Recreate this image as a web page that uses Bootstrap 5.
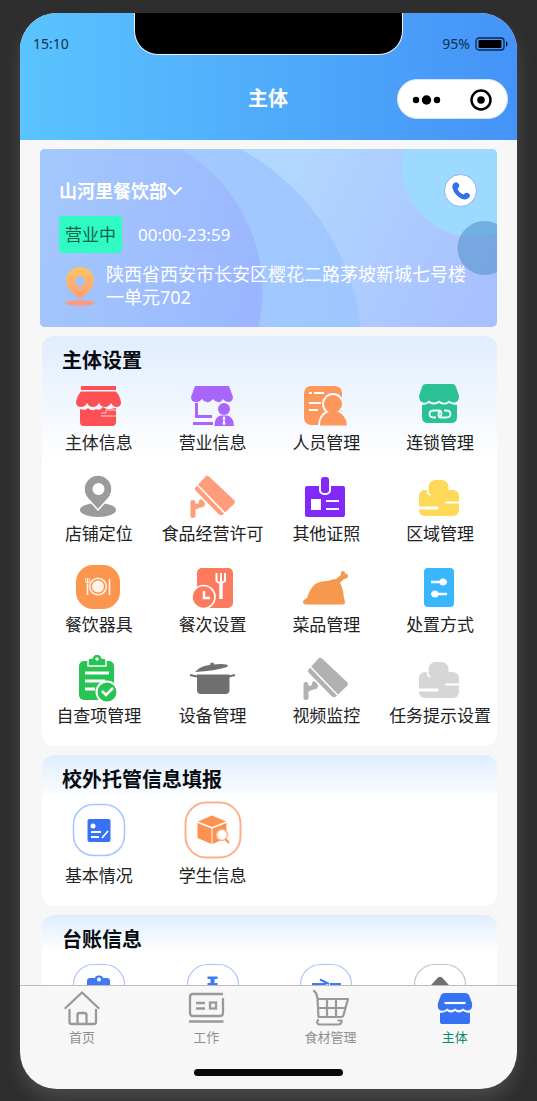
<!DOCTYPE html>
<html lang="zh-CN">
<head>
<meta charset="utf-8">
<meta name="viewport" content="width=device-width, initial-scale=1">
<title>主体</title>
<link href="https://cdn.jsdelivr.net/npm/bootstrap@5.3.0/dist/css/bootstrap.min.css" rel="stylesheet">
<style>
  body { background: #2e2e2e; font-family: "Noto Sans", "Noto Sans CJK SC", sans-serif; color: #222; }
  a { color: inherit; text-decoration: none; }
  .stage { height: 100vh; padding: 13px 20px 12px; }
  .phone { height: 100%; border-radius: 37px; background: #f7f7f7; box-shadow: 0 10px 16px #484848; }
  .topbar { height: 127px; background: linear-gradient(90deg, #5ac4fe, #4593f8); }
  .notch { top: 0; width: 54%; height: 42px; left: 23%; background: #000; border: 1px solid #e8f4ff; border-top: 0; border-radius: 0 0 24px 24px; }
  .statusline { height: 20px; margin-top: 21px; padding: 0 8px 0 13px; font-size: 14px; line-height: 20px; color: #12304f; }
  .titleline { height: 40px; margin-top: 25px; padding-right: 9px; }
  .titleline h1 { font-size: 20px; line-height: 30px; }
  .capsule { width: 111px; height: 40px; border: 1px solid #d5e3f8; }
  .capsule button, .picker { border: 0; padding: 0; background: none; }
  .feed { padding: 9px 20px 0; scrollbar-width: none; min-height: 0; }
  .feed::-webkit-scrollbar { display: none; }
  .hero { min-height: 178px; padding: 25px 20px 16px 19px; border-radius: 5px; color: #fff; margin-bottom: 9px; }
  .backdrop { inset: 0; }
  .shop { height: 33px; font-size: 18px; line-height: 28px; }
  .picker { color: #fff; }
  .call { width: 33px; height: 33px; padding: 0; background: #fff; border: 1px solid #8fb0f5; }
  .hours { margin-top: 9px; font-size: 17px; line-height: 37px; }
  .open-tag { background: #2ffbc3; color: #14614c; padding: 0 6px; border-radius: 4px; margin-right: 16px; }
  .address { margin-top: 10px; font-size: 18px; line-height: 23px; }
  .panel { margin: 0 0 9px 2px; padding-top: 10px; border-radius: 12px; background: linear-gradient(180deg, #e0edfe, #fff 30%); }
  .panel h2 { font-size: 20px; line-height: 30px; margin: 0 0 6px 20px; color: #080c12; }
  .tile { font-size: 17px; line-height: 26px; padding-bottom: 17px; white-space: nowrap; }
  .ringed svg { margin-bottom: 4px; }
  .tabbar { border-top: 1px solid #bdbdbd; height: 104px; padding-top: 2px; color: #8f8f8f; font-size: 13px; line-height: 18px; }
  .tabbar .active { color: #0b8a68; }
  .home-line { width: 30%; height: 7px; background: #0b0b0b; margin: 23px auto 0; border-radius: 4px; }
</style>
</head>
<body>
<svg width="0" height="0" class="position-absolute" aria-hidden="true">
  <symbol id="camera" viewBox="0 0 48 48">
    <path fill="currentColor" d="M16.500 3.500q1.500-1.500 3.500 0L45 27q2 2 0 4L34 41.500q-2 1.500-4 0L6.500 17.500q-1.500-1.500 0-3z"/>
    <path stroke="#fff" stroke-width="1.600" d="M8 11.500L36.500 41"/>
    <path fill="currentColor" d="M1.500 29q0-2 2.300-2t2.700 2v2l3-.5 1-4q3-1 5.500 4 0 4-4.500 4l-5 2v6q0 2.500-2.700 2.500t-2.300-2.500z"/>
  </symbol>
  <symbol id="cloud" viewBox="0 0 48 48">
    <rect fill="currentColor" x="12.500" y="7" width="20" height="28" rx="7"/>
    <rect fill="currentColor" x="3" y="17" width="40" height="26" rx="6"/>
    <path fill="none" stroke="#fff" stroke-width="1.600" d="M11.500 13v5q0 3 3 4"/>
    <path fill="#fff" d="M3 33.500h19q1.500 1.500 0 3H3zM29.500 28.500H43v2H29.500q-1.500-1 0-2z"/>
  </symbol>
</svg>
<div class="stage">
<div class="phone d-flex flex-column overflow-hidden position-relative">
  <header class="topbar flex-shrink-0 overflow-hidden">
    <div class="notch position-absolute"></div>
    <div class="statusline d-flex justify-content-between">
      <span>15:10</span>
      <span class="d-flex align-items-center gap-1">95%
        <svg width="35" height="16" viewBox="0 0 35 16" aria-hidden="true"><rect x="2" y="2" width="28" height="12" rx="3" fill="none" stroke="#10264a" stroke-width="1.300"/><rect x="4.500" y="4" width="23" height="8" rx="1"/><path d="M32 5q3 3 0 6z"/></svg></span>
    </div>
    <div class="titleline row g-0 align-items-center">
      <div class="col"></div>
      <h1 class="col-auto m-0 text-white fw-bold ps-2">主体</h1>
      <div class="col d-flex justify-content-end">
        <div class="capsule rounded-pill bg-white d-flex align-items-center justify-content-around">
          <button type="button" aria-label="更多"><svg width="30" height="22" viewBox="0 0 30 22"><circle cx="4" cy="11" r="3.200"/><circle cx="14.500" cy="11" r="4.700"/><circle cx="25" cy="11" r="3.200"/></svg></button>
          <button type="button" aria-label="关闭"><svg width="24" height="24" viewBox="0 0 24 24"><circle cx="12" cy="12" r="9.500" fill="none" stroke="#000" stroke-width="2.500"/><circle cx="12" cy="12" r="3.800"/></svg></button>
        </div>
      </div>
    </div>
  </header>

  <main class="feed flex-grow-1 overflow-auto">
    <section class="hero position-relative overflow-hidden">
      <svg class="backdrop position-absolute w-100 h-100" viewBox="0 0 458 178" preserveAspectRatio="xMidYMid slice" aria-hidden="true">
        <defs>
          <linearGradient id="sky" gradientUnits="userSpaceOnUse" x1="240" y1="40" x2="450" y2="140"><stop stop-color="#b2d7ff"/><stop offset="1" stop-color="#a9c0ff"/></linearGradient>
          <linearGradient id="wave" x1="0" x2="1"><stop offset=".3" stop-color="#a4ccff"/><stop offset="1" stop-color="#9fc7ff"/></linearGradient>
          <linearGradient id="deep" gradientUnits="userSpaceOnUse" x1="0" y1="60" x2="222" y2="120"><stop stop-color="#a3c8fc"/><stop offset="1" stop-color="#9bb6ff"/></linearGradient>
        </defs>
        <rect width="458" height="178" fill="url(#sky)"/>
        <circle cx="90" cy="205" r="233" fill="url(#wave)"/>
        <path d="M0 0H141A164 164 0 0 1 219 178H0z" fill="url(#deep)"/>
        <circle cx="434" cy="16" r="72" fill="#9cdbff" fill-opacity=".9"/>
        <circle cx="445" cy="99" r="27" fill="#4d8fc9" fill-opacity=".55"/>
      </svg>
      <div class="position-relative">
        <div class="shop d-flex align-items-center justify-content-between">
          <button type="button" class="picker fw-bold d-flex align-items-center">山河里餐饮部<svg width="16" height="12" viewBox="0 0 16 12" fill="none" stroke="#fff" stroke-width="2.200" stroke-linecap="round" aria-hidden="true"><path d="M2 3l6 6 6-6"/></svg></button>
          <button type="button" class="call rounded-circle d-flex align-items-center justify-content-center" aria-label="拨打电话"><svg width="20" height="20" viewBox="0 0 20 20" fill="#3370f0"><path d="M3 2q3-2 5 1.500 1 2-1.500 4 1.500 4.500 6 6 2-2.500 4.500-1.500 3.500 2 1 4.500-3 3.500-8 1Q3 13.500 1.500 7 1 3.500 3 2z"/></svg></button>
        </div>
        <div class="hours d-flex"><span class="open-tag">营业中</span><span>00:00-23:59</span></div>
        <div class="address d-flex">
          <svg class="flex-shrink-0 me-2" width="39" height="46" viewBox="0 0 39 46" aria-hidden="true">
            <defs><linearGradient id="pin" x1="0" y1="0" x2="0" y2="1"><stop stop-color="#fdc665"/><stop offset="1" stop-color="#ff9d79"/></linearGradient></defs>
            <ellipse cx="21" cy="40" rx="15" ry="2.800" fill="#fb9b80"/>
            <path fill="url(#pin)" fill-rule="evenodd" d="M21 4a14 14 0 0 1 14 14q0 7-9 14l-5 4-5-4Q7 25 7 18A14 14 0 0 1 21 4zm0 9.500a5 5 0 1 0 0 10 5 5 0 0 0 0-10z"/>
          </svg>
          <span>陕西省西安市长安区樱花二路茅坡新城七号楼一单元702</span>
        </div>
      </div>
    </section>

    <section class="panel">
      <h2 class="fw-bold">主体设置</h2>
      <div class="row g-0 text-center">
        <a href="#" class="tile col-3 d-flex flex-column align-items-center"><svg width="48" height="48" viewBox="0 0 48 48" fill="#fd5055"><path d="M6 4h35v4H6zM6 9.500h35q4 4 5 11 0 4-4 4.500-4 0-6-4-2 4-6 4t-6-4q-2 4-6 4t-6-4q-2 4-6 4-5 0-5-5 1-6 5-10.500zM5 27q6 2 8-1 4 4 8 1 4 2 7-2 4 3 7 2l6-1v14q0 4-4 4H9q-4 0-4-4z"/><path d="M26 31h5v-3h10M26 34h16" stroke="#fbd5da" stroke-width="1" fill="none"/></svg>主体信息</a>
        <a href="#" class="tile col-3 d-flex flex-column align-items-center"><svg width="48" height="48" viewBox="0 0 48 48" fill="#a866fc"><path d="M6 4h34l4 11q0 5-5 5-3 0-5-3-2 4-5 3-3 0-5-3-3 4-6 3-3 0-5-3-3 4-6 3-5 0-5-5z"/><path d="M7.500 21v13.500H23M4 41.500h20" fill="none" stroke="#a866fc" stroke-width="3"/><circle cx="35" cy="27" r="6"/><path d="M25.500 44q0-9 6-10.500h7q6 1.500 6.500 10.500z"/><path d="M35 34l1.500 2-1 2 1 4-1.500 1-1.500-1 1-4-1-2z" fill="#fff"/></svg>营业信息</a>
        <a href="#" class="tile col-3 d-flex flex-column align-items-center"><svg width="48" height="48" viewBox="0 0 48 48" fill="#fd975b"><rect x="2" y="4" width="38" height="39" rx="7"/><path d="M7 11h3m2 0h10M7 21h12M7 28h9" stroke="#fff" stroke-width="2"/><g stroke="#f4f8ff" stroke-width="4"><path d="M18 43.500q0-10 8.500-13.500h10q8 4 8.500 13.500z"/><circle cx="31" cy="22" r="9"/></g><path d="M18 43.500q0-10 8.500-13.500h10q8 4 8.500 13.500z"/><circle cx="31" cy="22" r="9"/></svg>人员管理</a>
        <a href="#" class="tile col-3 d-flex flex-column align-items-center"><svg width="48" height="48" viewBox="0 0 48 48" fill="#2ac295"><path d="M10 2h26q3 0 4 3l3 9q0 6-5 6.500-3 0-5-2-3 3-6 2t-4-2q-2 2-5 2t-5-2q-3 3-6 2-4-1-4-6.500L6 5q1-3 4-3zM6 23q4 0 7-2 4 3 10 0 5 3 10 0 3 2 8 2v12q0 6-6 6H12q-6 0-6-6z"/><path d="M20 35.500h-2q-4.500 0-4.500-3.500t4.500-3.500h5q2.500 0 2.500 3t-3 3M28 28.500h2q4.500 0 4.500 3.500t-4.500 3.500h-5q-2.500 0-2.500-3t3-3" fill="none" stroke="#e9fff8" stroke-width="1.800"/></svg>连锁管理</a>

        <a href="#" class="tile col-3 d-flex flex-column align-items-center"><svg width="48" height="48" viewBox="0 0 48 48" fill="#9b9b9b"><ellipse cx="23" cy="37" rx="18" ry="7"/><path stroke="#fff" stroke-width="1.500" d="M23 2a14 14 0 0 1 14 14q0 7-6 12l-8 9-8-9Q9 23 9 16A14 14 0 0 1 23 2z"/><circle cx="23.500" cy="16" r="6" fill="#fff"/></svg>店铺定位</a>
        <a href="#" class="tile col-3 d-flex flex-column align-items-center"><svg width="48" height="48" color="#fe9d7c"><use href="#camera"/></svg>食品经营许可</a>
        <a href="#" class="tile col-3 d-flex flex-column align-items-center"><svg width="48" height="48" viewBox="0 0 48 48" fill="#8228fb"><rect x="3" y="13" width="40" height="31" rx="2"/><rect x="18" y="3" width="10" height="18" rx="4" stroke="#fff" stroke-width="2"/><path fill="#fff" d="M9 26h10v11H9zM24 27h13v2H24zm0 8h13v2H24z"/></svg>其他证照</a>
        <a href="#" class="tile col-3 d-flex flex-column align-items-center"><svg width="48" height="48" color="#fdd957"><use href="#cloud"/></svg>区域管理</a>

        <a href="#" class="tile col-3 d-flex flex-column align-items-center"><svg width="48" height="48" viewBox="0 0 48 48"><rect x="1" y="1" width="44" height="44" rx="17" fill="#fc964f"/><g fill="none" stroke="#fff3e9"><circle cx="23" cy="22.500" r="8.300" stroke-width="1.500"/><path d="M12.500 20v11M34.500 15v16" stroke-width="1.600"/><path d="M10.800 14v4q1.700 3 3.400 0v-4M12.500 14v5" /></g><circle cx="23" cy="22.500" r="6" fill="#fff3e9"/></svg>餐饮器具</a>
        <a href="#" class="tile col-3 d-flex flex-column align-items-center"><svg width="48" height="48" viewBox="0 0 48 48" fill="#fc7a5d"><rect x="8" y="4" width="36" height="40" rx="5"/><circle cx="14.500" cy="33" r="11.500" stroke="#fff" stroke-width="1.700"/><g fill="none" stroke="#fff"><path d="M15 27v7h6" stroke-width="2.500"/><path d="M27.500 9v8q4 4 8.500 0V9M32 9v9" stroke-width="2"/><path d="M32 18v17" stroke-width="3.500"/></g></svg>餐次设置</a>
        <a href="#" class="tile col-3 d-flex flex-column align-items-center"><svg width="48" height="48" viewBox="0 0 48 48" fill="#f5994f"><path d="M1 38q0-2 4-4 3-9 7-13 5-4 14-4 4-2 8-2l5-4q-1-4 2.500-4 1.500 0 1.500 2.500 3 0 3 2.500 0 3-4 3l-4 4q3 5 4 15 1 3 1 5-1 1.500-3 1.500H4q-3 0-3-2.500z"/></svg>菜品管理</a>
        <a href="#" class="tile col-3 d-flex flex-column align-items-center"><svg width="48" height="48" viewBox="0 0 48 48" fill="#38b6fe"><rect x="8" y="4" width="30" height="39" rx="4"/><path d="M15 18h16M15 30h16" stroke="#fff" stroke-width="2.500"/><circle cx="27" cy="18" r="3.500" fill="#fff"/><circle cx="19" cy="30" r="3.500" fill="#fff"/></svg>处置方式</a>

        <a href="#" class="tile col-3 d-flex flex-column align-items-center"><svg width="48" height="48" viewBox="0 0 48 48" fill="#27c353"><rect x="4" y="6" width="35" height="39" rx="5"/><path stroke="#fff" stroke-width="1.500" d="M13 11V5q0-2 4-2 1-4 5-4t5 4q4 0 4 2v6z"/><circle cx="22" cy="4" r="1.700" fill="#fff"/><path d="M10 18h24M10 26h20M10 34h10" stroke="#fff" stroke-width="3"/><circle cx="32" cy="37" r="10.500" stroke="#fff" stroke-width="2"/><path d="M27 36l4 4 7-7" stroke="#fff" stroke-width="2.500" fill="none"/></svg>自查项管理</a>
        <a href="#" class="tile col-3 d-flex flex-column align-items-center"><svg width="48" height="48" viewBox="0 0 48 48" fill="#6f6f6f"><path d="M8 19.500h32.500V35q0 4-4 4H12q-4 0-4-4z"/><path d="M1 20l7 1.500M46 20l-6 1.500" stroke="#6f6f6f" stroke-width="2"/><path d="M6 17q5-6 15-7l.5-2 3-.5.500 2q8-1 14 .5l-1 2q-12 4-32 5z"/></svg>设备管理</a>
        <a href="#" class="tile col-3 d-flex flex-column align-items-center"><svg width="48" height="48" color="#b1b1b1"><use href="#camera"/></svg>视频监控</a>
        <a href="#" class="tile col-3 d-flex flex-column align-items-center"><svg width="48" height="48" color="#d6d6d6"><use href="#cloud"/></svg>任务提示设置</a>
      </div>
    </section>

    <section class="panel">
      <h2 class="fw-bold">校外托管信息填报</h2>
      <div class="row g-0 text-center ringed">
        <a href="#" class="tile col-3 d-flex flex-column align-items-center"><svg width="58" height="58" viewBox="0 0 58 58"><rect x="3.500" y="3.500" width="51" height="51" rx="20" fill="#fff" stroke="#a5c5fc" stroke-width="1.500"/><rect x="17.500" y="18" width="23" height="23" rx="2" fill="#3672f5"/><circle cx="23" cy="25" r="2.500" fill="#fff"/><path d="M21 31h10M21 36h8M32 37l6-7" stroke="#fff" stroke-width="1.800"/></svg>基本情况</a>
        <a href="#" class="tile col-3 d-flex flex-column align-items-center"><svg width="58" height="58" viewBox="0 0 58 58"><rect x="1.500" y="1.500" width="55" height="55" rx="21" fill="#fff" stroke="#fbb18c" stroke-width="2"/><path fill="#fc9152" d="M14 20.500L28 14.500l14 6-14 5.500zM13.500 22L27.500 27.500V43l-14-6zM42.500 22l-14 5.500V43l14-6z"/><circle cx="38" cy="34" r="5.500" fill="#fff" stroke="#fdb48b" stroke-width="1.500"/><path d="M41.500 38l3.500 4" stroke="#fc9152" stroke-width="2"/></svg>学生信息</a>
      </div>
    </section>

    <section class="panel">
      <h2 class="fw-bold">台账信息</h2>
      <div class="row g-0 ringed">
        <a href="#" class="tile col-3 d-flex justify-content-center" aria-label="台账"><svg width="58" height="58" viewBox="0 0 58 58"><rect x="3.500" y="3.500" width="51" height="51" rx="20" fill="#fff" stroke="#a5c5fc" stroke-width="1.200"/><path fill="#3f79f5" d="M17 20q0-3 3-3h5q0-2.500 4-2.500t4 2.500h4q3 0 3 3v22H17z"/><circle cx="29" cy="18.500" r="2" fill="#fff"/></svg></a>
        <a href="#" class="tile col-3 d-flex justify-content-center" aria-label="台账"><svg width="58" height="58" viewBox="0 0 58 58"><rect x="3.500" y="3.500" width="51" height="51" rx="20" fill="#fff" stroke="#a5c5fc" stroke-width="1.200"/><path fill="#3f79f5" d="M23.500 15.500h10v2.500h-3v4h3v18h-10V22h3v-4h-3z"/></svg></a>
        <a href="#" class="tile col-3 d-flex justify-content-center" aria-label="台账"><svg width="58" height="58" viewBox="0 0 58 58"><rect x="3.500" y="3.500" width="51" height="51" rx="20" fill="#fff" stroke="#a5c5fc" stroke-width="1.200"/><path fill="none" stroke="#3f79f5" stroke-width="2" d="M15 23h14M33 23h11M23 18.500l9 4.500M18 24v14h22V24"/></svg></a>
        <a href="#" class="tile col-3 d-flex justify-content-center" aria-label="台账"><svg width="58" height="58" viewBox="0 0 58 58"><rect x="3.500" y="3.500" width="51" height="51" rx="20" fill="#fff" stroke="#c2c2c2" stroke-width="1.200"/><path fill="#6f6f6f" d="M27 16.500q2-1.500 4 0l6.500 7V40h-17V23.500z"/></svg></a>
      </div>
    </section>
  </main>

  <nav class="tabbar flex-shrink-0">
    <div class="row g-0 text-center">
      <a href="#" class="col-3 d-flex flex-column align-items-center"><svg width="40" height="40" viewBox="0 0 40 40" fill="none" stroke="#999" stroke-width="2.300" stroke-linecap="round" stroke-linejoin="round"><path d="M3.500 20L20 4.500 36.500 20M7.500 22v12q0 2 2 2H32q2 0 2-2V22M15.500 36V27q0-2 2-2h5q2 0 2 2v9"/></svg>首页</a>
      <a href="#" class="col-3 d-flex flex-column align-items-center"><svg width="40" height="40" viewBox="0 0 40 40" fill="none" stroke="#999" stroke-width="2.300"><path d="M37 6H7q-3 0-3 3v16q0 3 3 3h27q3 0 3-3V10M3 33.500h34.500M10 15h9M10 20.500h9"/><rect x="24" y="14.500" width="6" height="6"/></svg>工作</a>
      <a href="#" class="col-3 d-flex flex-column align-items-center"><svg width="40" height="40" viewBox="0 0 40 40" fill="none" stroke="#999" stroke-width="2.200" stroke-linecap="round" stroke-linejoin="round"><path d="M3 3q3 2 3.500 8l1 18H30q2 0 2.500-2L37 11H6.500M7 20h27M16 12v17M25 12v17M7 32q-2 4 1 4.500h19q4 0 3.500-4h-3"/></svg>食材管理</a>
      <a href="#" class="col-3 d-flex flex-column align-items-center active" aria-current="page"><svg width="40" height="40" viewBox="0 0 40 40" fill="#3572f5"><path d="M10 5h20q3 0 4 2l3 8q1 7-4 7.500-3 0-5-2-4 3-8 0-4 3-8 0-3 3-6 2-4-1-3-7.500l3-8q1-2 4-2zM5 25q4 0 7-2 4 3 8 0 4 3 8 0 3 2 7 2v9q0 2-2 2H7q-2 0-2-2z"/><path d="M9.500 15h21" stroke="#fff" stroke-width="2.200"/></svg>主体</a>
    </div>
    <div class="home-line"></div>
  </nav>
</div>
</div>
<script src="https://cdn.jsdelivr.net/npm/bootstrap@5.3.0/dist/js/bootstrap.bundle.min.js"></script>
</body>
</html>
